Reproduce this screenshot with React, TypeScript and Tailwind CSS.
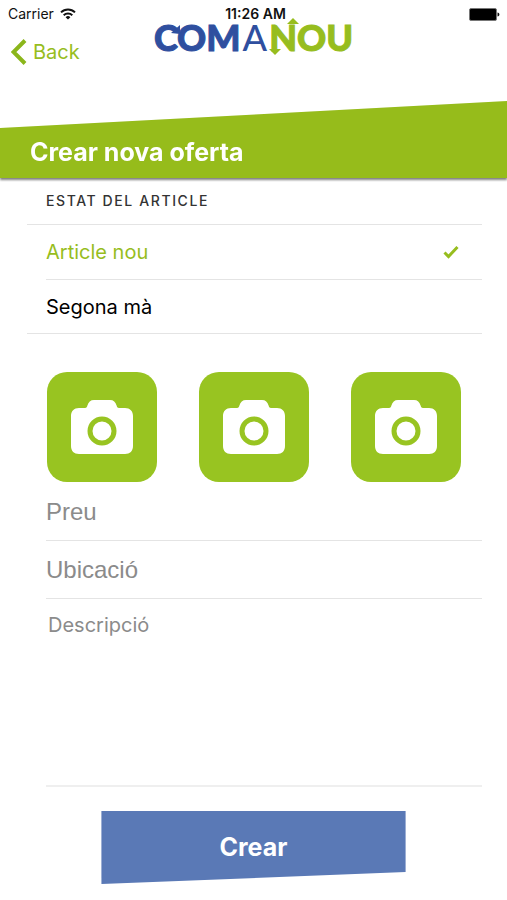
import { useState } from "react";
import { clsx } from "clsx";

const conditions = ["Article nou", "Segona mà"];
const photoSlots = [1, 2, 3];

const WifiIcon = () => (
  <svg viewBox="0 0 16 12" className="h-3 w-4" fill="none" stroke="#111" strokeWidth="2" aria-hidden="true">
    <path d="M1 4.4a10 10 0 0 1 14 0" />
    <path d="M3.7 7.2a6.2 6.2 0 0 1 8.6 0" />
    <path d="M8 11.6 5.6 9.2a3.5 3.5 0 0 1 4.8 0z" fill="#111" stroke="none" />
  </svg>
);

const BatteryIcon = () => (
  <svg viewBox="0 0 31 13" className="h-[13px] w-[31px]" aria-hidden="true">
    <rect x="0.5" y="0.5" width="27" height="12" rx="1.5" fill="#000" stroke="#777" />
    <path d="M28.500 4.500c2.500.6 2.500 3.400 0 4z" fill="#111" />
  </svg>
);

const CameraIcon = () => (
  <svg viewBox="0 0 62 54" className="h-[54px] w-[62px]" aria-hidden="true">
    <path
      d="M8 8h6c1.600 0 2-.8 2.400-2.400C17.400 2 19.500 0 23 0h16c3.500 0 5.600 2 6.600 5.600C46 7.200 46.400 8 48 8h6c5 0 8 3 8 8v30c0 5-3 8-8 8H8c-5 0-8-3-8-8V16c0-5 3-8 8-8z"
      fill="#fff"
    />
    <circle cx="31" cy="31" r="12" fill="none" stroke="#98c421" strokeWidth="5" />
  </svg>
);

const Logo = () => (
  <div className="relative flex gap-[2px] font-['Lato'] text-[36px] leading-[18px] font-black" aria-label="Comanou">
    <span className="text-[#2f4f9f] [-webkit-text-stroke:1px_#2f4f9f]">COM</span>
    <span className="font-medium text-[#2f4f9f]">A</span>
    <span className="relative text-[#97bd1e] [-webkit-text-stroke:1px_#97bd1e]">
      NOU
      {/* arrow heads on both stems of the N */}
      <svg viewBox="0 0 30 38" className="absolute -top-[10px] left-0 h-[38px] w-[30px]" fill="#97bd1e" aria-hidden="true">
        <path d="M18 6l6-6 6 6z" />
        <path d="M0 31h12l-6 6z" />
      </svg>
    </span>
    <svg viewBox="0 0 10 10" className="absolute -top-[3px] left-[17px] h-[10px] w-[10px]" fill="#2f4f9f" aria-hidden="true">
      <path d="M9 0v9L0 8z" />
    </svg>
  </div>
);

const App = () => {
  const [condition, setCondition] = useState("Article nou");

  return (
    <div className="min-h-screen bg-white font-['Inter',sans-serif] text-black">
      {/* Status bar */}
      <div className="grid h-7 grid-cols-3 items-center px-2 text-sm text-[#111]">
        <div className="flex items-center gap-[6px]">
          <span>Carrier</span>
          <WifiIcon />
        </div>
        <span className="pl-1 text-center font-semibold">11:26 AM</span>
        <div className="-mr-px flex justify-end">
          <BatteryIcon />
        </div>
      </div>

      {/* Navigation */}
      <nav className="grid h-[73px] grid-cols-[1fr_auto_1fr] items-start">
        <button type="button" className="flex h-12 items-center gap-[6px] pl-[11px] text-xl text-[#97bd1e]">
          <svg viewBox="0 0 16 26" className="h-[26px] w-4" fill="none" stroke="#8bb61b" strokeWidth="4" aria-hidden="true">
            <path d="M14 1.500 2.500 13 14 24.500" />
          </svg>
          Back
        </button>
        <Logo />
      </nav>

      {/* Title banner */}
      <header className="drop-shadow-[0_2px_1px_rgba(0,0,0,0.5)]">
        <div className="h-[77px] bg-[#96bc1b] px-[30px] pt-[35px] [clip-path:polygon(0_27px,100%_0,100%_100%,0_100%)]">
          <h1 className="text-[25px] leading-8 font-bold text-white">Crear nova oferta</h1>
        </div>
      </header>

      <form onSubmit={(e) => e.preventDefault()}>
        {/* Article condition */}
        <fieldset className="mr-[25px] ml-[27px]">
          <legend className="flex h-[46px] w-full items-center pl-[19px] text-sm font-medium tracking-[1.6px] text-[#333]">
            ESTAT DEL ARTICLE
          </legend>
          <div className="border-y border-[#e4e4e4] pl-[19px]">
            {conditions.map((name, idx) => (
              <label
                key={name}
                className={clsx(
                  "flex h-[54px] cursor-pointer items-center justify-between pr-[23px] text-xl",
                  idx > 0 && "border-t border-[#e4e4e4]",
                  condition === name && "text-[#97bd1e]"
                )}
              >
                <input
                  type="radio"
                  name="condition"
                  className="sr-only"
                  checked={condition === name}
                  onChange={() => setCondition(name)}
                />
                {name}
                {condition === name && (
                  <svg viewBox="0 0 16 14" className="h-[14px] w-4" fill="none" stroke="#97bd1e" strokeWidth="3" aria-hidden="true">
                    <path d="M1.500 7.500 5.500 11.500 14.500 2" />
                  </svg>
                )}
              </label>
            ))}
          </div>
        </fieldset>

        {/* Photos */}
        <div className="mt-[38px] flex justify-between pr-[46px] pl-[47px]">
          {photoSlots.map((slot) => (
            <button
              key={slot}
              type="button"
              aria-label={`Foto ${slot}`}
              className="flex size-[110px] items-center justify-center rounded-[20px] bg-[#98c421]"
            >
              <CameraIcon />
            </button>
          ))}
        </div>

        <div className="mt-px mr-[25px] ml-[46px]">
          <input
            type="text"
            aria-label="Preu"
            placeholder="Preu"
            className="block h-[58px] w-full border-b border-[#e4e4e4] font-['Liberation_Sans',sans-serif] text-2xl outline-none placeholder:text-[#8b8b8b]"
          />
          <input
            type="text"
            aria-label="Ubicació"
            placeholder="Ubicació"
            className="block h-[58px] w-full border-b border-[#e4e4e4] font-['Liberation_Sans',sans-serif] text-2xl outline-none placeholder:text-[#8b8b8b]"
          />
          <textarea
            aria-label="Descripció"
            placeholder="Descripció"
            className="block h-[188px] w-full resize-none border-b-2 border-[#efefef] px-[2px] pt-3 text-xl outline-none placeholder:text-[#8b8b8b]"
          />
        </div>

        <button
          type="submit"
          className="mx-auto mt-6 block h-[73px] w-3/5 bg-[#5a79b6] text-[25px] font-bold text-white [clip-path:polygon(0_0,100%_0,100%_61px,0_100%)]"
        >
          Crear
        </button>
      </form>
    </div>
  );
};

export default App;
